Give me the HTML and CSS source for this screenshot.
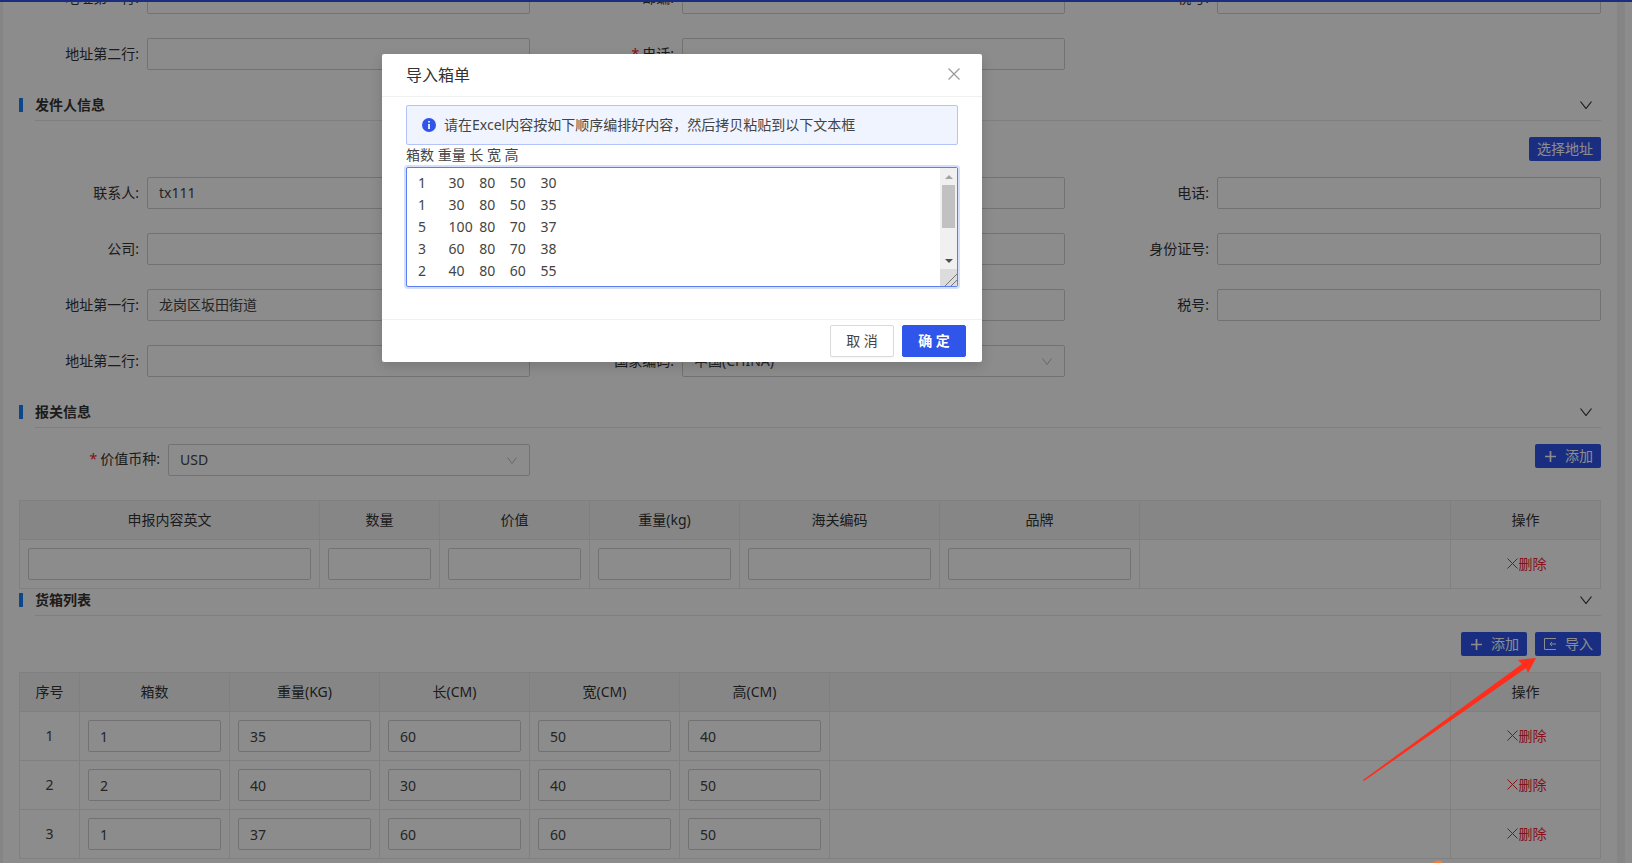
FILE: index.html
```html
<!DOCTYPE html>
<html lang="zh-CN">
<head>
    <meta charset="UTF-8">
    <title>导入箱单</title>
    <link rel="stylesheet" href="styles.css">
</head>
<body>
    <div class="topbar"></div>
    <div class="page">
        <div class="edge"></div>
        <div class="content">
            <div class="form-grid">
                <div class="field"><label><i>*</i>地址第一行:</label><input class="input"></div>
                <div class="field"><label>邮编:</label><input class="input"></div>
                <div class="field"><label>税号:</label><input class="input"></div>
                <div class="field"><label>地址第二行:</label><input class="input"></div>
                <div class="field"><label><i>*</i>电话:</label><input class="input"></div>
            </div>

            <div class="section-head">
                <span class="section-mark"></span>
                <div class="section-title">发件人信息
                    <svg width="12" height="8" viewBox="0 0 12 8"><path d="M.5.5 6 7.5 11.5.5" fill="none" stroke="#333" stroke-width="1.2"/></svg>
                </div>
            </div>
            <div class="actions"><button class="btn">选择地址</button></div>
            <div class="form-grid">
                <div class="field"><label>联系人:</label><input class="input" value="tx111"></div>
                <div class="field"><label></label><input class="input"></div>
                <div class="field"><label>电话:</label><input class="input"></div>
                <div class="field"><label>公司:</label><input class="input"></div>
                <div class="field"><label></label><input class="input"></div>
                <div class="field"><label>身份证号:</label><input class="input"></div>
                <div class="field"><label>地址第一行:</label><input class="input" value="龙岗区坂田街道"></div>
                <div class="field"><label></label><input class="input"></div>
                <div class="field"><label>税号:</label><input class="input"></div>
                <div class="field"><label>地址第二行:</label><input class="input"></div>
                <div class="field"><label>国家编码:</label>
                    <div class="select">中国(CHINA)
                        <svg width="10" height="7" viewBox="0 0 10 7"><path d="M.5.5 5 6.5 9.5.5" fill="none" stroke="#bbb"/></svg>
                    </div>
                </div>
            </div>

            <div class="section-head">
                <span class="section-mark"></span>
                <div class="section-title">报关信息
                    <svg width="12" height="8" viewBox="0 0 12 8"><path d="M.5.5 6 7.5 11.5.5" fill="none" stroke="#333" stroke-width="1.2"/></svg>
                </div>
            </div>
            <div class="currency-row">
                <div class="currency-label"><i>*</i>价值币种:</div>
                <div class="select currency-select">USD
                    <svg width="10" height="7" viewBox="0 0 10 7"><path d="M.5.5 5 6.5 9.5.5" fill="none" stroke="#bbb"/></svg>
                </div>
                <button class="btn btn-add">
                    <svg width="11" height="11" viewBox="0 0 11 11"><path d="M5.5 0v11M0 5.5h11" stroke="#fff" stroke-width="1.7"/></svg>
                    添加
                </button>
            </div>

            <table class="grid-table declare-table">
                <colgroup>
                    <col class="w300"><col class="w120"><col class="w150"><col class="w150"><col class="w200"><col class="w200"><col><col class="w150">
                </colgroup>
                <tr><th>申报内容英文</th><th>数量</th><th>价值</th><th>重量(kg)</th><th>海关编码</th><th>品牌</th><th></th><th>操作</th></tr>
                <tr>
                    <td><input class="input"></td>
                    <td><input class="input"></td>
                    <td><input class="input"></td>
                    <td><input class="input"></td>
                    <td><input class="input"></td>
                    <td><input class="input"></td>
                    <td></td>
                    <td class="op"><a class="del"><svg width="11" height="11" viewBox="0 0 11 11"><path d="M.5.5l10 10M10.5.5l-10 10" stroke="#f5222d"/></svg>删除</a></td>
                </tr>
            </table>

            <div class="section-head tight">
                <span class="section-mark"></span>
                <div class="section-title">货箱列表
                    <svg width="12" height="8" viewBox="0 0 12 8"><path d="M.5.5 6 7.5 11.5.5" fill="none" stroke="#333" stroke-width="1.2"/></svg>
                </div>
            </div>
            <div class="actions">
                <button class="btn btn-add">
                    <svg width="11" height="11" viewBox="0 0 11 11"><path d="M5.5 0v11M0 5.5h11" stroke="#fff" stroke-width="1.7"/></svg>
                    添加
                </button>
                <button class="btn btn-import">
                    <svg width="12" height="12" viewBox="0 0 12 12"><path d="M12 .5H.5v11H12M12 6H6M8 4 6 6l2 2" fill="none" stroke="#fff"/></svg>
                    导入
                </button>
            </div>

            <table class="grid-table box-table">
                <colgroup>
                    <col class="w60"><col class="w150"><col class="w150"><col class="w150"><col class="w150"><col class="w150"><col><col class="w150">
                </colgroup>
                <tr><th>序号</th><th>箱数</th><th>重量(KG)</th><th>长(CM)</th><th>宽(CM)</th><th>高(CM)</th><th></th><th>操作</th></tr>
                <tr>
                    <td class="seq">1</td>
                    <td><input class="input" value="1"></td>
                    <td><input class="input" value="35"></td>
                    <td><input class="input" value="60"></td>
                    <td><input class="input" value="50"></td>
                    <td><input class="input" value="40"></td>
                    <td></td>
                    <td class="op"><a class="del"><svg width="11" height="11" viewBox="0 0 11 11"><path d="M.5.5l10 10M10.5.5l-10 10" stroke="#f5222d"/></svg>删除</a></td>
                </tr>
                <tr>
                    <td class="seq">2</td>
                    <td><input class="input" value="2"></td>
                    <td><input class="input" value="40"></td>
                    <td><input class="input" value="30"></td>
                    <td><input class="input" value="40"></td>
                    <td><input class="input" value="50"></td>
                    <td></td>
                    <td class="op"><a class="del"><svg width="11" height="11" viewBox="0 0 11 11"><path d="M.5.5l10 10M10.5.5l-10 10" stroke="#f5222d"/></svg>删除</a></td>
                </tr>
                <tr>
                    <td class="seq">3</td>
                    <td><input class="input" value="1"></td>
                    <td><input class="input" value="37"></td>
                    <td><input class="input" value="60"></td>
                    <td><input class="input" value="60"></td>
                    <td><input class="input" value="50"></td>
                    <td></td>
                    <td class="op"><a class="del"><svg width="11" height="11" viewBox="0 0 11 11"><path d="M.5.5l10 10M10.5.5l-10 10" stroke="#f5222d"/></svg>删除</a></td>
                </tr>
            </table>
        </div>
        <div class="rail"></div>
    </div>

    <div class="mask"></div>

    <div class="modal">
        <div class="modal-head">
            <span>导入箱单</span>
            <svg width="12" height="12" viewBox="0 0 12 12"><path d="M.5.5l11 11M11.5.5l-11 11" stroke="#999" stroke-width="1.2"/></svg>
        </div>
        <div class="modal-body">
            <div class="alert">
                <svg width="14" height="14" viewBox="0 0 14 14"><circle cx="7" cy="7" r="7" fill="#2f55eb"/><path d="M7 3v1.6M7 6v5" stroke="#fff" stroke-width="1.7"/></svg>
                <span>请在Excel内容按如下顺序编排好内容，然后拷贝粘贴到以下文本框</span>
            </div>
            <div class="hint">箱数 重量 长 宽 高</div>
            <div class="box-wrap">
                <textarea class="box-text" spellcheck="false">1	30	80	50	30
1	30	80	50	35
5	100	80	70	37
3	60	80	70	38
2	40	80	60	55</textarea>
                <div class="scrollbar">
                    <div class="scroll-btn"><span class="arrow-up"></span></div>
                    <div class="scroll-track"><div class="scroll-thumb"></div></div>
                    <div class="scroll-btn"><span class="arrow-down"></span></div>
                    <div class="scroll-corner"></div>
                </div>
            </div>
        </div>
        <div class="modal-foot">
            <button class="modal-btn">取 消</button>
            <button class="modal-btn primary">确 定</button>
        </div>
    </div>

    <svg class="callout" width="1632" height="863" viewBox="0 0 1632 863">
        <path d="M1363 780 1522 664 1518 660 1536 658 1528 673 1526 668 1364 781Z" fill="#ff2d1a"/>
        <path d="M1432 863q4-3 10-2v2Z" fill="#ff7a30"/>
    </svg>
</body>
</html>
```

FILE: styles.css
```css
* {
    margin: 0;
    padding: 0;
    box-sizing: border-box;
    font-family: "Noto Sans", "Noto Sans CJK SC", sans-serif;
}
body {
    width: 1632px;
    height: 863px;
    overflow: hidden;
    background: #fff;
    color: #333;
    font-size: 14px;
    position: relative;
}
.topbar {
    position: absolute;
    top: 0;
    left: 0;
    right: 0;
    height: 2px;
    background: #2f55eb;
}
.page {
    display: flex;
    height: 863px;
    overflow: hidden;
}
.edge {
    width: 3px;
    flex: none;
    background: #f2f2f2;
}
.content {
    width: 1614px;
    flex: none;
    padding: 0 16px;
    margin-top: -18px;
}
.rail {
    width: 8px;
    flex: none;
    margin-right: 7px;
    background: #f2f2f2;
}

.form-grid {
    display: grid;
    grid-template-columns: 519px 519px 1fr;
    column-gap: 16px;
    row-gap: 24px;
    margin-left: -8px;
}
.field {
    display: flex;
    align-items: center;
}
.field label {
    width: 128px;
    margin-right: 8px;
    padding-bottom: 2px;
    flex: none;
    text-align: right;
}
i {
    color: #f5222d;
    font-style: normal;
    margin-right: 3px;
}
.input {
    display: block;
    width: 100%;
    height: 32px;
    padding: 0 11px 2px;
    border: 1px solid #d0d0d0;
    border-radius: 2px;
    background: #fff;
    color: #444;
    font-size: 14px;
    outline: none;
}
.select {
    flex: 1;
    height: 32px;
    padding: 0 12px 2px 11px;
    border: 1px solid #d0d0d0;
    border-radius: 2px;
    color: #444;
    display: flex;
    align-items: center;
    justify-content: space-between;
}
.select svg {
    margin-top: 2px;
}

.section-head {
    display: flex;
    margin-top: 28px;
}
.section-head.tight {
    margin-top: 4px;
}
.section-mark {
    width: 4px;
    height: 14px;
    flex: none;
    background: #1b80ff;
}
.section-title {
    flex: 1;
    height: 23px;
    margin-left: 12px;
    padding-right: 9px;
    border-bottom: 1px solid #e8e8e8;
    display: flex;
    justify-content: space-between;
    align-items: flex-start;
    font-weight: 600;
    line-height: 14px;
    color: #333;
}
.section-title svg {
    margin-top: 3px;
}

.actions {
    display: flex;
    justify-content: flex-end;
    gap: 8px;
    margin: 16px 0;
}
.btn {
    height: 24px;
    padding: 0 8px 2px;
    border: none;
    border-radius: 2px;
    background: #2f55eb;
    color: #fff;
    font-size: 14px;
    display: flex;
    align-items: center;
}
.btn svg {
    margin-top: 2px;
}
.btn-add svg {
    margin-right: 9px;
    margin-left: 2px;
}
.btn-import svg {
    margin-right: 9px;
    margin-left: 1px;
}

.currency-row {
    display: flex;
    align-items: flex-start;
    margin: 16px 0 24px;
}
.currency-label {
    width: 141px;
    height: 32px;
    line-height: 30px;
    text-align: right;
}
.currency-select {
    flex: none;
    width: 362px;
    margin-left: 8px;
}
.currency-row .btn-add {
    margin-left: auto;
}

.grid-table {
    width: 100%;
    table-layout: fixed;
    border-collapse: collapse;
}
.grid-table th,
.grid-table td {
    border: 1px solid #eaeaea;
    text-align: center;
}
.grid-table th {
    height: 39px;
    padding-bottom: 2px;
    background: #f5f5f5;
    font-weight: 400;
    color: #333;
}
.grid-table td {
    height: 49px;
    padding: 0 8px;
}
.grid-table .seq,
.grid-table .op {
    padding-bottom: 2px;
}
.grid-table .input {
    padding-bottom: 0;
}
.seq {
    color: #444;
}
.w60 { width: 60px; }
.w120 { width: 120px; }
.w150 { width: 150px; }
.w200 { width: 200px; }
.w300 { width: 300px; }
.del {
    color: #f5222d;
    margin-left: 2px;
    display: inline-flex;
    align-items: center;
    gap: 1px;
}

.mask {
    position: absolute;
    inset: 0;
    background: rgba(0, 0, 0, 0.45);
}
.modal {
    position: absolute;
    top: 54px;
    left: 382px;
    width: 600px;
    height: 308px;
    background: #fff;
    border-radius: 2px;
    box-shadow: 0 4px 12px rgba(0, 0, 0, 0.15);
    display: flex;
    flex-direction: column;
}
.modal-head {
    height: 43px;
    flex: none;
    padding: 0 22px 2px 24px;
    border-bottom: 1px solid #f0f0f0;
    display: flex;
    align-items: center;
    justify-content: space-between;
    font-size: 16px;
    color: #333;
}
.modal-body {
    flex: 1;
    padding: 8px 24px 0;
}
.alert {
    height: 40px;
    padding: 0 0 2px 15px;
    border: 1px solid #b3c4fa;
    border-radius: 2px;
    background: #f0f4ff;
    display: flex;
    align-items: center;
    gap: 8px;
    color: #444;
}
.alert svg {
    margin-top: 2px;
}
.hint {
    height: 22px;
    line-height: 20px;
    color: #444;
}
.box-wrap {
    position: relative;
    height: 120px;
}
.box-text {
    display: block;
    width: 100%;
    height: 120px;
    padding: 4px 0 4px 11px;
    border: 1px solid #5b7ff0;
    border-radius: 2px;
    box-shadow: 0 0 0 2px #d5dffc;
    outline: none;
    overflow: hidden;
    resize: none;
    white-space: pre;
    font-size: 14px;
    line-height: 22px;
    tab-size: 30.6px;
    color: #444;
}
.scrollbar {
    position: absolute;
    top: 1px;
    right: 1px;
    bottom: 1px;
    width: 17px;
    background: #f0f0f0;
    display: flex;
    flex-direction: column;
}
.scroll-btn {
    height: 17px;
    flex: none;
    display: flex;
    align-items: center;
    justify-content: center;
}
.arrow-up {
    border-left: 4px solid transparent;
    border-right: 4px solid transparent;
    border-bottom: 4px solid #a3a3a3;
}
.arrow-down {
    border-left: 4px solid transparent;
    border-right: 4px solid transparent;
    border-top: 4px solid #505050;
}
.scroll-track {
    flex: 1;
    padding: 0 2px;
}
.scroll-thumb {
    height: 43px;
    background: #c1c1c1;
}
.scroll-corner {
    height: 17px;
    flex: none;
    background: linear-gradient(135deg, #dcdcdc 62%, #777 62%, #777 67%, #dcdcdc 67%, #dcdcdc 80%, #777 80%, #777 85%, #dcdcdc 85%);
}
.modal-foot {
    height: 43px;
    flex: none;
    padding: 5px 16px 0 0;
    border-top: 1px solid #f0f0f0;
    display: flex;
    justify-content: flex-end;
    gap: 8px;
}
.modal-btn {
    width: 64px;
    height: 32px;
    padding-bottom: 2px;
    border: 1px solid #d9d9d9;
    border-radius: 2px;
    background: #fff;
    color: #444;
    font-size: 14px;
    box-shadow: 0 2px 0 rgba(0, 0, 0, 0.02);
}
.modal-btn.primary {
    border-color: #2f55eb;
    background: #2f55eb;
    color: #fff;
    font-weight: 600;
}
.callout {
    position: absolute;
    top: 0;
    left: 0;
    pointer-events: none;
}
```
